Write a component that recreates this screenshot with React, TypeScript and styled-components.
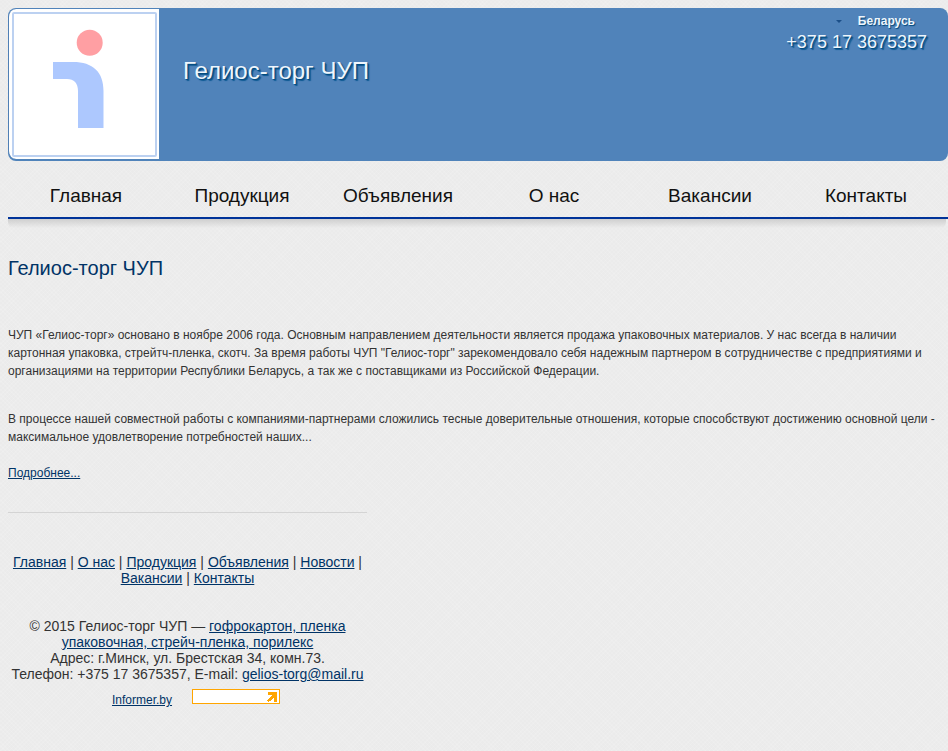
import React from "react";
import styled, { createGlobalStyle } from "styled-components";

const Global = createGlobalStyle`
  html, body { margin: 0; padding: 0; }
  body {
    background-color: #ebebeb;
    background-image:
      repeating-linear-gradient(45deg, rgba(255, 255, 255, 0.1) 0 1px, transparent 1px 3px),
      repeating-linear-gradient(-45deg, rgba(255, 255, 255, 0.1) 0 1px, transparent 1px 3px);
    font-family: "Liberation Sans", Arial, sans-serif;
    overflow: hidden;
  }
  a { color: #003366; text-decoration: underline; }
`;

const Page = styled.div`
  width: 940px;
  height: 751px;
  padding: 8px 0 0 8px;
`;

const Header = styled.header`
  position: relative;
  display: flex;
  height: 153px;
  background: #5083ba;
  border-radius: 8px;
  overflow: hidden;
`;

const LogoBox = styled.div`
  width: 151px;
  height: 150px;
  margin-top: 1px;
  flex: none;
  background: #fff;
  border-left: 1px solid #4f7fb5;
  border-radius: 8px 0 0 8px;
  box-sizing: border-box;
  padding: 3px 2px 2px 3px;
  display: flex;
`;

const LogoFrame = styled.div`
  flex: 1;
  border: 2px solid #bcd1f1;
  border-radius: 2px;
  background: #fff;
  display: flex;
`;

const SiteName = styled.h1`
  margin: 46px 0 0 24px;
  font-size: 24px;
  line-height: 34px;
  font-weight: 400;
  color: #eef6fd;
  text-shadow: 1px 1px 1px #00477a, 2px 2px 1px #0f5c96;
`;

const Contacts = styled.div`
  position: absolute;
  top: 6px;
  right: 21px;
  text-align: right;
  color: #eef6fd;
`;

const Region = styled.div`
  display: flex;
  justify-content: flex-end;
  align-items: center;
  gap: 16px;
  margin-right: 12px;
  height: 14px;
  font-size: 12px;
  font-weight: 700;
  text-shadow: 1px 1px 1px #00477a;
`;

const Caret = styled.span`
  width: 0;
  height: 0;
  border-left: 3px solid transparent;
  border-right: 3px solid transparent;
  border-top: 3px solid #1b4f88;
`;

const Phone = styled.div`
  margin-top: 3px;
  font-size: 18px;
  line-height: 22px;
  text-shadow: 1px 1px 1px #00477a, 2px 2px 1px #0f5c96;
`;

const Nav = styled.nav`
  position: relative;
  display: flex;
  height: 56px;
  border-bottom: 2px solid #003399;

  &::after {
    content: "";
    position: absolute;
    left: 0;
    right: 2px;
    top: 58px;
    height: 9px;
    border-radius: 0 0 6px 6px;
    background: linear-gradient(to bottom, #cfcfcf, rgba(222, 222, 222, 0));
  }
`;

const NavItem = styled.a`
  width: 156px;
  text-align: center;
  font-size: 19px;
  line-height: 70px;
  color: #111;
  text-decoration: none;
`;

const Title = styled.h2`
  margin: 37px 0 0;
  font-size: 20px;
  line-height: 24px;
  font-weight: 400;
  color: #003366;
`;

const Paragraph = styled.p<{ $top: number }>`
  margin: ${(p) => p.$top}px 0 0;
  font-size: 12px;
  line-height: 18px;
  color: #333;
`;

const Divider = styled.hr`
  width: 359px;
  height: 1px;
  margin: 30px 0 0;
  border: 0;
  background: #d4d4d4;
`;

const Footer = styled.footer`
  width: 359px;
  text-align: center;
  font-size: 14px;
  line-height: 16px;
  color: #333;
`;

const FooterLinks = styled.div`
  margin-top: 41px;
`;

const Copyright = styled.div`
  margin-top: 32px;
`;

const InformerRow = styled.div`
  display: flex;
  margin-top: 7px;
  font-size: 12px;
  padding-left: 104px;
  gap: 20px;
`;

const InformerLink = styled.a`
  margin-top: 3px;
`;

const Badge = styled.div`
  width: 88px;
  height: 15px;
  box-sizing: border-box;
  border: 1px solid #ffa500;
  background: #fff;
  display: flex;
  justify-content: flex-end;
  align-items: center;
  padding-right: 2px;
`;

const nav = ["Главная", "Продукция", "Объявления", "О нас", "Вакансии", "Контакты"];

export default function App() {
  return (
    <Page>
      <Global />
      <Header>
        <LogoBox>
          <LogoFrame>
            <svg width="141" height="141" viewBox="0 0 141 141">
              <circle cx="75.700" cy="28.800" r="13" fill="#ff9fa3" />
              <path d="M39 48h20c20 0 30.500 10 30.500 29V114H64V77c0-8-4-12-11-12H39z" fill="#adc8fe" />
            </svg>
          </LogoFrame>
        </LogoBox>
        <SiteName>Гелиос-торг ЧУП</SiteName>
        <Contacts>
          <Region>
            <Caret />
            <span>Беларусь</span>
          </Region>
          <Phone>+375 17 3675357</Phone>
        </Contacts>
      </Header>
      <Nav>
        {nav.map((n) => (
          <NavItem key={n} href="#">{n}</NavItem>
        ))}
      </Nav>
      <Title>Гелиос-торг ЧУП</Title>
      <Paragraph $top={46}>
        ЧУП «Гелиос-торг» основано в ноябре 2006 года. Основным направлением деятельности является продажа упаковочных материалов. У нас всегда в наличии картонная упаковка, стрейтч-пленка, скотч. За время работы ЧУП "Гелиос-торг" зарекомендовало себя надежным партнером в сотрудничестве с предприятиями и организациями на территории Республики Беларусь, а так же с поставщиками из Российской Федерации.
      </Paragraph>
      <Paragraph $top={30}>
        В процессе нашей совместной работы с компаниями-партнерами сложились тесные доверительные отношения, которые способствуют достижению основной цели - максимальное удовлетворение потребностей наших...
      </Paragraph>
      <Paragraph $top={18}>
        <a href="#">Подробнее...</a>
      </Paragraph>
      <Divider />
      <Footer>
        <FooterLinks>
          <a href="#">Главная</a> | <a href="#">О нас</a> | <a href="#">Продукция</a> | <a href="#">Объявления</a> | <a href="#">Новости</a> | <a href="#">Вакансии</a> | <a href="#">Контакты</a>
        </FooterLinks>
        <Copyright>
          © 2015 Гелиос-торг ЧУП — <a href="#">гофрокартон, пленка упаковочная, стрейч-пленка, порилекс</a>
          <br />
          Адрес: г.Минск, ул. Брестская 34, комн.73.
          <br />
          Телефон: +375 17 3675357, E-mail: <a href="#">gelios-torg@mail.ru</a>
        </Copyright>
        <InformerRow>
          <InformerLink href="#">Informer.by</InformerLink>
          <Badge>
            <svg width="10" height="10" viewBox="0 0 10 10" shapeRendering="crispEdges">
              <path d="M1 0h9v10H7V5L5 7 3 9 1 10 0 8 2 6 5 3H1z" fill="#ffa500" />
            </svg>
          </Badge>
        </InformerRow>
      </Footer>
    </Page>
  );
}
